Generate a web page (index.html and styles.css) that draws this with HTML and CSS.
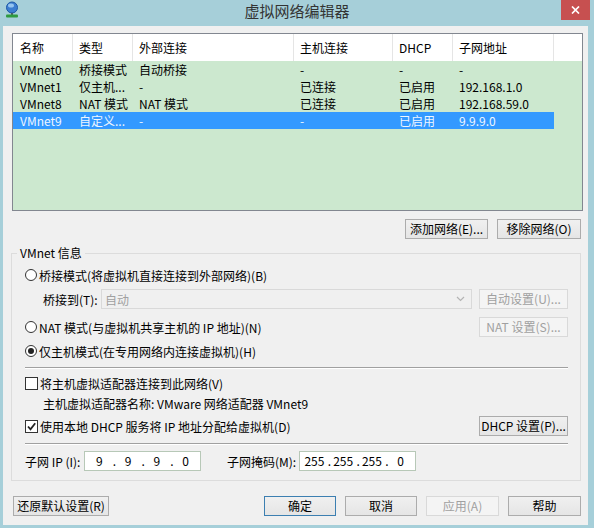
FILE: index.html
```html
<!DOCTYPE html>
<html lang="zh-CN">
<head>
<meta charset="utf-8">
<title>虚拟网络编辑器</title>
<link rel="stylesheet" href="styles.css">
</head>
<body>
<div class="window">
  <div class="titlebar">
    <svg class="icon" width="16" height="18" viewBox="0 0 16 18">
      <circle cx="8" cy="6.5" r="5.5" fill="#3b7dd0" stroke="#1d58a6" stroke-width="1"/>
      <ellipse cx="7" cy="4.6" rx="3" ry="2" fill="#a6d0f5" opacity="0.85"/>
      <rect x="7" y="12" width="2" height="2" fill="#4a5a66"/>
      <rect x="2" y="13.5" width="12" height="3" rx="1" fill="#2e9a40"/>
    </svg>
    <div class="title">虚拟网络编辑器</div>
    <div class="close">
      <svg width="9" height="8" viewBox="0 0 9 8"><path d="M1 0.5 L8 7.5 M8 0.5 L1 7.5" stroke="#fff" stroke-width="1.7"/></svg>
    </div>
  </div>
  <div class="client">
    <div class="list">
      <div class="lrow head">
        <div class="c">名称</div>
        <div class="c">类型</div>
        <div class="c">外部连接</div>
        <div class="c">主机连接</div>
        <div class="c">DHCP</div>
        <div class="c">子网地址</div>
        <div class="fill"></div>
      </div>
      <div class="lrow">
        <div class="c">VMnet0</div>
        <div class="c">桥接模式</div>
        <div class="c">自动桥接</div>
        <div class="c">-</div>
        <div class="c">-</div>
        <div class="c">-</div>
        <div class="fill"></div>
      </div>
      <div class="lrow">
        <div class="c">VMnet1</div>
        <div class="c">仅主机...</div>
        <div class="c">-</div>
        <div class="c">已连接</div>
        <div class="c">已启用</div>
        <div class="c">192.168.1.0</div>
        <div class="fill"></div>
      </div>
      <div class="lrow">
        <div class="c">VMnet8</div>
        <div class="c">NAT 模式</div>
        <div class="c">NAT 模式</div>
        <div class="c">已连接</div>
        <div class="c">已启用</div>
        <div class="c">192.168.59.0</div>
        <div class="fill"></div>
      </div>
      <div class="lrow sel">
        <div class="c">VMnet9</div>
        <div class="c">自定义...</div>
        <div class="c">-</div>
        <div class="c">-</div>
        <div class="c">已启用</div>
        <div class="c">9.9.9.0</div>
        <div class="fill"></div>
      </div>
    </div>

    <div class="listbtns">
      <div class="btn w-add">添加网络(E)...</div>
      <div class="btn w-rm">移除网络(O)</div>
    </div>

    <div class="group">
      <div class="legend">VMnet 信息</div>

      <div class="row r-a">
        <span class="radio"></span><span>桥接模式(将虚拟机直接连接到外部网络)(B)</span>
      </div>

      <div class="row r-b">
        <span class="blabel">桥接到(T):</span>
        <div class="combo"><span>自动</span>
          <svg width="9" height="6" viewBox="0 0 9 6"><path d="M1 1 L4.5 4.5 L8 1" fill="none" stroke="#b4b4b4" stroke-width="1.2"/></svg>
        </div>
        <div class="btn dis w-side">自动设置(U)...</div>
      </div>

      <div class="row r-c spread">
        <div class="opt"><span class="radio"></span><span>NAT 模式(与虚拟机共享主机的 IP 地址)(N)</span></div>
        <div class="btn dis w-side">NAT 设置(S)...</div>
      </div>

      <div class="row r-d">
        <span class="radio on"></span><span>仅主机模式(在专用网络内连接虚拟机)(H)</span>
      </div>

      <div class="sep s1"></div>

      <div class="row r-e">
        <span class="check"></span><span>将主机虚拟适配器连接到此网络(V)</span>
      </div>

      <div class="row r-f">
        <span class="indent">主机虚拟适配器名称: VMware 网络适配器 VMnet9</span>
      </div>

      <div class="row r-g spread">
        <div class="opt"><span class="check">
          <svg width="11" height="11" viewBox="0 0 11 11"><path d="M2 5.5 L4.5 8.3 L9.2 2.2" fill="none" stroke="#222" stroke-width="1.8"/></svg>
        </span><span>使用本地 DHCP 服务将 IP 地址分配给虚拟机(D)</span></div>
        <div class="btn w-side">DHCP 设置(P)...</div>
      </div>

      <div class="sep s2"></div>

      <div class="row r-h">
        <span class="iplabel">子网 IP (I):</span>
        <div class="ip">
          <span class="oct">9</span><span class="dot">.</span><span class="oct">9</span><span class="dot">.</span><span class="oct">9</span><span class="dot">.</span><span class="oct">0</span>
        </div>
        <span class="masklabel">子网掩码(M):</span>
        <div class="ip">
          <span class="oct">255</span><span class="dot">.</span><span class="oct">255</span><span class="dot">.</span><span class="oct">255</span><span class="dot">.</span><span class="oct">0</span>
        </div>
      </div>
    </div>

    <div class="bottom">
      <div class="btn w-restore">还原默认设置(R)</div>
      <div class="right">
        <div class="btn focus w-72">确定</div>
        <div class="btn w-72">取消</div>
        <div class="btn dis w-73">应用(A)</div>
        <div class="btn w-73">帮助</div>
      </div>
    </div>
  </div>
</div>
</body>
</html>
```

FILE: styles.css
```css
* { box-sizing: border-box; }

body {
  margin: 0;
  width: 594px;
  height: 528px;
  overflow: hidden;
  background: #a6cfd9;
  font-family: "Noto Sans CJK SC", sans-serif;
  font-size: 12px;
  color: #000;
}

.window {
  display: flex;
  flex-direction: column;
  height: 528px;
}

.titlebar {
  height: 26px;
  flex: none;
  display: grid;
  grid-template-columns: 1fr auto 1fr;
  align-items: start;
}

.icon {
  margin: 1px 0 0 4px;
}

.title {
  font-size: 15px;
  line-height: 22px;
  color: #333;
}

.close {
  justify-self: end;
  width: 29px;
  height: 20px;
  margin-right: 4px;
  background: #c75050;
  display: flex;
  align-items: center;
  justify-content: center;
}

.client {
  flex: 1;
  margin: 0 6px 3px 3px;
  background: #f0f0f0;
  display: flex;
  flex-direction: column;
}

/* list view */
.list {
  margin: 7px 5px 0 9px;
  height: 178px;
  border: 1px solid #828790;
  background: #cce8cf;
  flex: none;
}

.lrow {
  display: grid;
  grid-template-columns: 60px 60px 161px 99px 60px 101px 1fr;
  height: 17px;
  line-height: 17px;
  white-space: nowrap;
}

.lrow .c {
  padding-left: 6px;
  overflow: hidden;
}

.lrow .c:first-child {
  padding-left: 7px;
}

.head {
  height: 27px;
  line-height: 27px;
  background: #fff;
}

.head .c {
  border-right: 1px solid #e5e5e5;
}

.sel .c {
  background: #3399ff;
  color: #eef6ff;
}

/* buttons */
.btn {
  height: 20px;
  border: 1px solid #acacac;
  background: linear-gradient(#f0f0f0, #e5e5e5);
  line-height: 18px;
  text-align: center;
  white-space: nowrap;
  flex: none;
}

.btn.dis {
  border-color: #d9d9d9;
  background: #f4f4f4;
  color: #a0a0a0;
}

.btn.focus {
  border-color: #3c7fb1;
}

.w-add { width: 83px; }
.w-rm { width: 84px; }
.w-side { width: 89px; }
.w-restore { width: 96px; }
.w-72 { width: 72px; }
.w-73 { width: 73px; }

.listbtns {
  display: flex;
  justify-content: flex-end;
  gap: 9px;
  margin: 8px 7px 0 0;
}

/* group box */
.group {
  position: relative;
  margin: 14px 7px 0 8px;
  border: 1px solid #dcdcdc;
  padding: 11px 12px 9px 13px;
}

.legend {
  position: absolute;
  top: -8px;
  left: 5px;
  padding: 0 3px;
  background: #f0f0f0;
  line-height: 14px;
}

.row {
  display: flex;
  align-items: center;
  height: 20px;
  white-space: nowrap;
}

.spread {
  justify-content: space-between;
}

.opt {
  display: flex;
  align-items: center;
}

.r-b { margin-top: 4px; }
.r-c { margin-top: 8px; }
.r-d { margin-top: 4px; }
.r-e { margin-top: 4px; }
.r-g { margin-top: 3px; }
.r-h { margin-top: 6px; }

.radio {
  width: 12px;
  height: 12px;
  border: 1px solid #333;
  border-radius: 50%;
  background: #fff;
  margin-right: 2px;
  display: flex;
  align-items: center;
  justify-content: center;
  flex: none;
}

.radio.on::after {
  content: "";
  width: 6px;
  height: 6px;
  border-radius: 50%;
  background: #222;
}

.check {
  width: 13px;
  height: 13px;
  border: 1px solid #333;
  background: #fff;
  margin-right: 2px;
  display: flex;
  align-items: center;
  justify-content: center;
  flex: none;
}

.blabel {
  margin-left: 18px;
  width: 58px;
}

.combo {
  width: 371px;
  height: 20px;
  margin-right: 7px;
  border: 1px solid #d9d9d9;
  background: #f0f0f0;
  color: #a0a0a0;
  padding: 0 6px 0 3px;
  display: flex;
  align-items: center;
  justify-content: space-between;
}

.sep {
  height: 2px;
  border-top: 1px solid #a0a0a0;
  border-bottom: 1px solid #fff;
}

.s1 { margin-top: 6px; }
.s2 { margin-top: 7px; }

.indent {
  margin-left: 18px;
}

.iplabel {
  width: 59px;
}

.masklabel {
  margin-left: 26px;
  width: 72px;
}

.ip {
  width: 117px;
  height: 20px;
  border: 1px solid #b7c8b7;
  background: #fff;
  display: flex;
  align-items: center;
  padding: 0 1px;
}

.oct {
  width: 27px;
  text-align: center;
  line-height: 18px;
}

.dot {
  width: 2px;
  text-align: center;
  line-height: 18px;
}

/* bottom buttons */
.bottom {
  display: flex;
  justify-content: space-between;
  margin: 15px 7px 0 10px;
}

.right {
  display: flex;
  gap: 9px;
}
```
